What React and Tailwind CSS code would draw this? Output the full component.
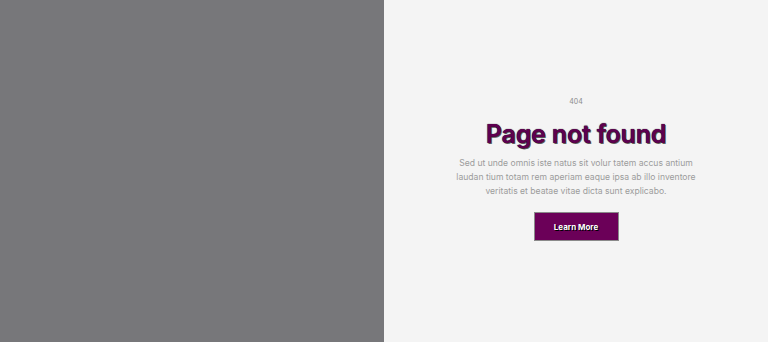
export default function App() {
  return (
    <div className="flex h-[342px] w-full" style={{ fontFamily: "Inter, 'Noto Sans', sans-serif" }}>
      <div className="w-1/2 bg-[#77777a]" />
      <div className="flex w-1/2 flex-col items-center bg-[#f4f4f4] pt-[98px] text-center">
        <p className="text-[7px] leading-[8px] text-[#8a8a8a]">404</p>
        <h1 className="mt-[13px] text-[25px] font-semibold leading-[30px] tracking-[-0.2px] text-[#5e0050] [text-shadow:0_0_1px_#000,1px_1px_0_rgba(0,0,0,0.6)]">
          Page not found
        </h1>
        <p className="mt-[7px] whitespace-nowrap text-[8.6px] leading-[14px] text-[#9c9c9c]">
          Sed ut unde omnis iste natus sit volur tatem accus antium
          <br />
          laudan tium totam rem aperiam eaque ipsa ab illo inventore
          <br />
          veritatis et beatae vitae dicta sunt explicabo.
        </p>
        <button className="mt-[14px] h-[29px] w-[85px] border border-[#8a8a8a] bg-[#6b0058] text-[8px] font-bold text-white [text-shadow:1px_1px_0_#000]">
          Learn More
        </button>
      </div>
    </div>
  );
}
